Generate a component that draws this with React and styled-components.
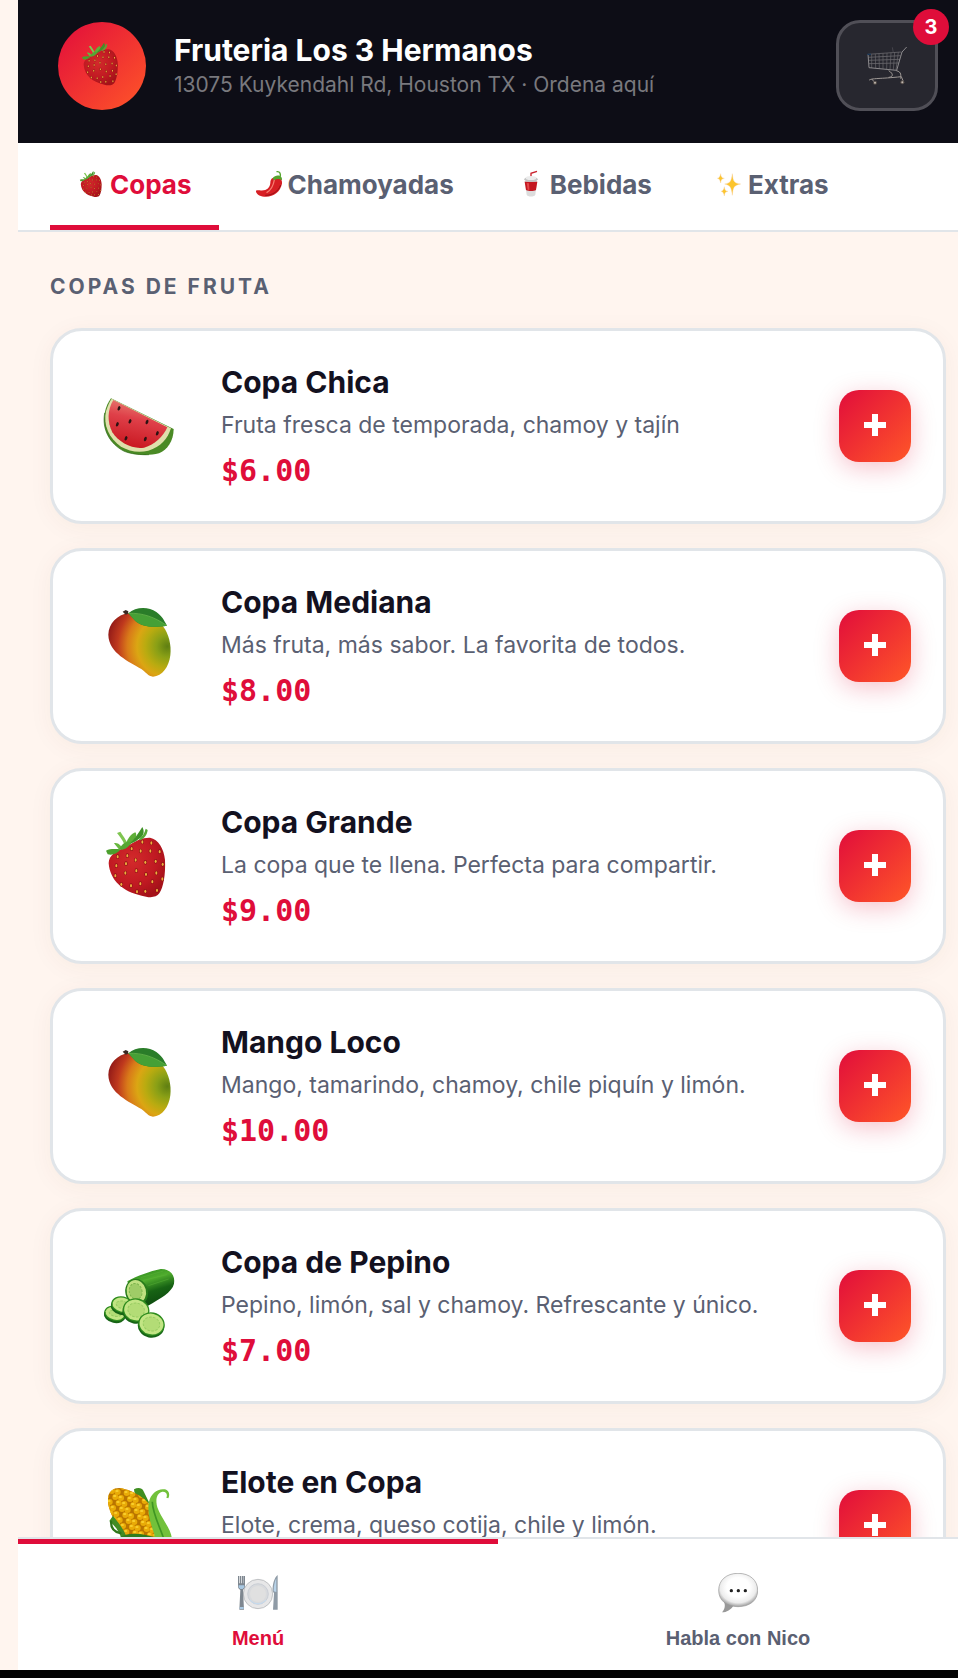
import React, { useId, useState } from 'react';
import styled, { createGlobalStyle } from 'styled-components';

const red = '#df0d3a';
const slate = '#5a6072';
const ink = '#13111f';
const line = '#e1e5e9';
const cream = '#fff5ef';
const warm = 'linear-gradient(135deg, #e10d3b, #ff5628)';

const Global = createGlobalStyle`
  * { box-sizing: border-box; }
  body { margin: 0; background: ${cream}; font-family: Inter, "Liberation Sans", sans-serif; }
  button { font: inherit; border: 0; background: none; padding: 0; cursor: pointer; }
`;

const Page = styled.div`
  height: 100vh;
  display: flex;
  flex-direction: column;
  overflow: hidden;
  border-bottom: 8px solid #040404;
`;

const Shell = styled.div`
  flex: 1;
  min-height: 0;
  margin: 0 -20px 0 18px;
  display: flex;
  flex-direction: column;
`;

const Header = styled.header`
  display: flex;
  align-items: center;
  gap: 28px;
  padding: 20px 40px 32px;
  background: #0d0d16;
`;

const Avatar = styled.div`
  width: 88px;
  height: 88px;
  padding-bottom: 4px;
  border-radius: 50%;
  background: ${warm};
  display: grid;
  place-items: center;
`;

const Brand = styled.div`
  flex: 1;
  padding-top: 2px;
`;

const BrandName = styled.h1`
  margin: 0;
  font-size: 30px;
  line-height: 36px;
  font-weight: 700;
  color: #fff;
`;

const Address = styled.p`
  margin: 0;
  font-size: 21px;
  line-height: 34px;
  color: #79797e;
`;

const CartButton = styled.button`
  position: relative;
  width: 102px;
  height: 91px;
  border: 3px solid #504f57;
  border-radius: 24px;
  background: #27272f;
  display: grid;
  place-items: center;
`;

const Badge = styled.span`
  position: absolute;
  top: -14px;
  right: -14px;
  width: 36px;
  height: 36px;
  border-radius: 50%;
  background: ${red};
  color: #fff;
  font-size: 20px;
  line-height: 36px;
  font-weight: 700;
  text-align: center;
`;

const Tabs = styled.nav`
  display: flex;
  gap: 8px;
  padding: 0 32px;
  background: #fff;
  border-bottom: 2px solid ${line};
`;

const Tab = styled.button`
  display: flex;
  align-items: center;
  gap: 4px;
  height: 87px;
  padding: 0 28px;
  font-size: 26px;
  font-weight: 700;
  white-space: nowrap;
  color: ${(p) => (p.$active ? red : slate)};
  border-bottom: 5px solid ${(p) => (p.$active ? red : 'transparent')};
`;

const Menu = styled.main`
  flex: 1;
  min-height: 0;
  overflow-y: auto;
  scrollbar-width: none;
  padding: 40px 32px 24px;
  background: ${cream};
`;

const SectionTitle = styled.h2`
  margin: 0 0 26px;
  font-size: 21px;
  line-height: 30px;
  font-weight: 700;
  letter-spacing: 3px;
  text-transform: uppercase;
  color: ${slate};
`;

const List = styled.ul`
  list-style: none;
  margin: 0;
  padding: 0;
  display: flex;
  flex-direction: column;
  gap: 24px;
`;

const Card = styled.li`
  display: flex;
  align-items: center;
  gap: 28px;
  padding: 26px 32px;
  background: #fff;
  border: 3px solid ${line};
  border-radius: 32px;
  box-shadow: 0 4px 24px rgba(120, 50, 20, 0.05);
`;

const Picture = styled.div`
  width: 108px;
  padding-bottom: 8px;
  display: flex;
  justify-content: center;
`;

const Details = styled.div`flex: 1;`;

const Name = styled.h3`
  margin: 0;
  font-size: 30px;
  line-height: 50px;
  font-weight: 700;
  color: ${ink};
`;

const Description = styled.p`
  margin: 0;
  font-size: 23px;
  line-height: 36px;
  color: ${slate};
`;

const Price = styled.p`
  margin: 4px 0 0;
  font-family: "DejaVu Sans Mono", monospace;
  font-size: 30px;
  line-height: 48px;
  font-weight: 700;
  color: ${red};
`;

const AddButton = styled.button`
  width: 72px;
  height: 72px;
  padding-bottom: 2px;
  border-radius: 20px;
  background: ${warm};
  box-shadow: 0 6px 24px rgba(224, 14, 56, 0.25);
  display: grid;
  place-items: center;
`;

const BottomNav = styled.nav`
  display: grid;
  grid-template-columns: 1fr 1fr;
  background: #fff;
  border-top: 2px solid ${line};
`;

const NavButton = styled.button`
  display: flex;
  flex-direction: column;
  align-items: center;
  gap: 13px;
  padding: 29px 0 20px;
  border-top: 5px solid ${(p) => (p.$active ? red : 'transparent')};
  font-family: "Liberation Sans", Arial, sans-serif;
  font-size: 20px;
  line-height: 24px;
  font-weight: 700;
  color: ${(p) => (p.$active ? red : slate)};
`;

const Art = styled.svg`
  display: block;
  flex: none;
`;

const seeds = [
  [113, 170], [142, 167], [155, 146], [182, 153], [211, 153], [187, 126], [214, 129], [239, 155],
  [109, 197], [138, 191], [167, 180], [196, 187], [227, 184], [248, 193], [106, 227], [136, 219],
  [169, 212], [198, 223], [229, 219], [247, 237], [124, 253], [153, 257], [181, 251], [217, 245],
  [196, 274], [231, 271], [171, 275],
];

function Strawberry({ size }) {
  const id = useId();
  return (
    <Art width={size} height={size} viewBox="63 72 228 228" aria-hidden="true">
      <defs>
        <radialGradient id={id} cx="42%" cy="38%" r="65%">
          <stop offset="0" stopColor="#d32a2b" /><stop offset=".65" stopColor="#c01922" /><stop offset="1" stopColor="#a51219" />
        </radialGradient>
      </defs>
      <path fill={`url(#${id})`} d="M86 190C86 165 110 151 140 140C165 122 190 112 210 113C235 117 252 146 255 180C257 225 250 262 238 280C228 295 205 293 185 287C130 276 90 242 86 190Z" />
      {seeds.map(([x, y]) => (
        <g key={`${x}-${y}`}>
          <ellipse cx={x} cy={y} rx="5" ry="7" fill="#8f1116" />
          <ellipse cx={x} cy={y} rx="3" ry="5" fill="#eeb03d" />
        </g>
      ))}
      <path fill="#4c9f2d" d="M78 152C92 145 108 148 122 148C113 160 98 167 83 163Z" />
      <path fill="#68b83f" d="M102 130C112 126 124 136 128 148L116 147Z" />
      <path fill="#7fc551" d="M111 99L121 95C130 108 137 119 143 130L133 133C127 119 119 109 111 99Z" />
      <path fill="#5faf38" d="M134 146C138 120 154 100 166 97C173 105 166 120 154 130Z" />
      <path fill="#3f9128" d="M147 132C164 119 174 101 187 81C196 97 189 111 175 118C167 125 156 131 147 132Z" />
      <path fill="#58a836" d="M176 119C186 109 194 101 197 86L203 90C201 106 192 116 180 121Z" />
      <path fill="#56a634" d="M117 148C125 132 139 122 153 126C150 139 138 146 127 149Z" />
    </Art>
  );
}

function Mango({ size }) {
  const id = useId();
  return (
    <Art width={size} height={size} viewBox="63 105 228 228" aria-hidden="true">
      <defs>
        <radialGradient id={id} gradientUnits="userSpaceOnUse" cx="262" cy="232" r="182">
          <stop offset="0" stopColor="#5f7f12" /><stop offset=".18" stopColor="#8aa016" /><stop offset=".36" stopColor="#b9ab10" />
          <stop offset=".5" stopColor="#dba613" /><stop offset=".66" stopColor="#d97a19" /><stop offset=".82" stopColor="#bf391d" /><stop offset="1" stopColor="#921a18" />
        </radialGradient>
      </defs>
      <path fill={`url(#${id})`} d="M85 197C86 162 112 138 145 132C185 130 228 145 250 173C266 194 275 228 271 259C267 293 247 322 219 323C204 322 198 309 184 300C149 278 86 253 85 197Z" />
      <path fill="#3a2a24" d="M128 128L137 123L145 127L144 134L137 137Z" />
      <path fill="#2a7d29" d="M145 133C167 113 205 112 229 129C245 140 252 153 261 170C222 176 190 176 166 156Z" />
      <path fill="#46a036" d="M145 133C185 133 222 143 261 170C222 176 190 176 166 156Z" />
      <path d="M145 133C187 131 224 144 261 170" fill="none" stroke="#6fba50" strokeWidth="2" />
    </Art>
  );
}

const melonSeeds = [[357, 508], [352, 556], [390, 547], [441, 549], [472, 583], [378, 598], [436, 600]];

function Watermelon({ size }) {
  const id = useId();
  return (
    <Art width={size} height={size} viewBox="303 435 228 228" aria-hidden="true">
      <defs>
        <linearGradient id={id} x1=".6" y1="0" x2=".35" y2="1">
          <stop offset="0" stopColor="#e98577" /><stop offset=".4" stopColor="#df4049" /><stop offset="1" stopColor="#c8161f" />
        </linearGradient>
      </defs>
      <path fill="#4a8a25" d="M333 478L521 570C521 605 502 633 477 643C445 651 400 649 371 636C331 615 305 573 314 522C318 503 325 489 333 478Z" />
      <path fill="#dfe0ac" d="M335 479L513 568C503 600 482 624 445 635C413 642 387 636 363 623C327 599 309 558 318 517C323 500 329 487 335 479Z" />
      <path fill={`url(#${id})`} d="M340 483L502 565C489 593 465 617 432 626C397 632 356 610 337 580C321 549 322 512 340 483Z" />
      <path fill="none" stroke="#2e6716" strokeWidth="2" d="M314 522C305 573 331 615 371 636C390 645 424 648 447 647" />
      {melonSeeds.map(([x, y]) => (
        <ellipse key={x} cx={x} cy={y} rx="4" ry="7" fill="#2c1212" transform={`rotate(20 ${x} ${y})`} />
      ))}
    </Art>
  );
}

const slices = [[105, 189, 33, 23], [126, 163, 33, 25], [168, 179, 40, 35], [214, 221, 40, 35]];

function Cucumber({ size }) {
  const id = useId();
  return (
    <Art width={size} height={size} viewBox="63 39 228 228" aria-hidden="true">
      <defs>
        <linearGradient id={id} x1=".3" y1="0" x2=".7" y2="1">
          <stop offset="0" stopColor="#2f8b20" /><stop offset=".3" stopColor="#4fac2d" /><stop offset=".6" stopColor="#176314" /><stop offset="1" stopColor="#0c470e" />
        </linearGradient>
      </defs>
      <path fill={`url(#${id})`} d="M142 91C172 74 210 61 242 54C270 53 287 73 282 98C276 124 240 143 204 164C180 155 150 125 142 91Z" />
      <path d="M182 80L250 60M190 88L261 71M205 104L266 84" stroke="#5db53a" strokeWidth="3" opacity=".45" />
      <ellipse cx="170" cy="123" rx="34" ry="40" fill="#287c1b" transform="rotate(-14 170 123)" />
      <ellipse cx="169" cy="122" rx="29" ry="35" fill="#bfe080" transform="rotate(-14 169 122)" />
      <ellipse cx="167" cy="121" rx="19" ry="24" fill="#9fcc67" stroke="#7fb64f" strokeWidth="3" strokeDasharray="7 4" transform="rotate(-14 167 121)" />
      {slices.map(([x, y, rx, ry]) => (
        <g key={x} transform={`rotate(12 ${x} ${y})`}>
          <ellipse cx={x} cy={y + 4} rx={rx} ry={ry} fill="#176416" />
          <ellipse cx={x} cy={y - 2} rx={rx} ry={ry} fill="#2e8c1e" />
          <ellipse cx={x} cy={y - 2} rx={rx - 4} ry={ry - 4} fill="#c2e584" />
          <ellipse cx={x} cy={y - 2} rx={rx - 15} ry={ry - 14} fill="#b3dc76" stroke="#98cc62" strokeWidth="3" strokeDasharray="8 4" />
        </g>
      ))}
    </Art>
  );
}

const kernels = [];
for (let r = -4; r < 10; r += 1) {
  for (let c = 0; c < 9; c += 1) {
    kernels.push([322 + r * 10 + c * 17, 318 + r * 18 - c * 6 + (c % 2) * 9]);
  }
}

function Corn({ size }) {
  const id = useId();
  return (
    <Art width={size} height={size} viewBox="303 249 228 228" aria-hidden="true">
      <defs>
        <clipPath id={id}>
          <path d="M325 286C329 266 350 256 373 264C408 273 443 297 453 319C462 350 469 388 470 425L440 450L395 418C362 392 316 330 325 286Z" />
        </clipPath>
      </defs>
      <path fill="#3f8e21" d="M402 265C413 258 426 260 430 269L447 304L440 316C421 300 403 287 402 265Z" />
      <g clipPath={`url(#${id})`}>
        <path fill="#b97400" d="M300 240H490V470H300Z" />
        {kernels.map(([x, y]) => (
          <g key={`${x}-${y}`}>
            <ellipse cx={x} cy={y} rx="9" ry="9" fill="#e9ab07" />
            <ellipse cx={x - 2} cy={y - 3} rx="5" ry="3" fill="#f9d02f" />
          </g>
        ))}
      </g>
      <path fill="#418c23" d="M328 360L339 344C354 364 370 382 378 404L364 410C356 390 345 374 328 360Z" />
      <path fill="none" stroke="#2e7519" strokeWidth="7" strokeLinecap="round" d="M333 362C333 382 344 393 361 396" />
      <path fill="#72c13b" d="M447 303C452 277 474 261 495 265C506 268 511 279 505 292L499 290C504 278 497 271 487 272C469 276 466 298 472 319C483 352 512 380 516 413C517 445 500 466 465 470L463 400C451 366 441 333 447 303Z" />
      <path fill="none" stroke="#3f9523" strokeWidth="5" d="M457 302C457 335 477 371 492 415" />
      <path fill="#2f7c1d" d="M356 412C380 392 430 396 470 411L490 465C440 478 385 465 356 412Z" />
    </Art>
  );
}

function Chili() {
  return (
    <Art width="28" height="28" viewBox="762 508 84 84" aria-hidden="true">
      <path fill="#d71f24" d="M815 532C832 526 845 534 843 549C838 573 818 588 795 588C780 588 767 582 765 573C764 568 769 568 776 569C795 572 807 562 808 547C808 540 810 535 815 532Z" />
      <path fill="none" stroke="#f77c70" strokeWidth="4" strokeLinecap="round" d="M820 538C817 554 811 568 798 575" />
      <path fill="none" stroke="#941015" strokeWidth="3" d="M839 553C832 572 815 584 793 584" />
      <path fill="#55a52d" d="M815 533C820 525 830 523 837 526C842 528 844 533 843 539C834 533 826 535 819 539Z" />
      <path fill="none" stroke="#55a52d" strokeWidth="4" strokeLinecap="round" d="M837 529C840 520 837 512 828 513" />
    </Art>
  );
}

function Cup() {
  return (
    <Art width="28" height="28" viewBox="117 508 84 84" aria-hidden="true">
      <path fill="none" stroke="#c9202b" strokeWidth="4" d="M156 530V518L174 512" />
      <path fill="#dcdcdc" d="M137 540L143 582C144 589 168 589 169 582L174 540Z" />
      <path fill="#c31720" d="M137 543L141 568C149 572 164 572 171 568L175 543Z" />
      <path fill="#e4474a" d="M143 547L146 567L151 568L150 548Z" />
      <ellipse cx="156" cy="536" rx="20" ry="8" fill="#c4c4c4" />
      <ellipse cx="156" cy="532" rx="16" ry="6" fill="#ececec" />
    </Art>
  );
}

function Sparkles() {
  return (
    <Art width="28" height="28" viewBox="715 508 84 84" aria-hidden="true">
      <g fill="#fcc52d" stroke="#f5c98e" strokeWidth="1">
        <path d="M764 519C766 542 769 547 789 550C769 554 766 559 764 584C761 559 758 554 741 550C758 547 761 542 764 519Z" />
        <path d="M729 519C730 529 732 531 740 533C732 535 730 537 729 547C727 537 725 535 719 533C725 531 727 529 729 519Z" />
        <path d="M740 558C741 568 743 570 751 572C743 574 741 576 740 586C738 576 736 574 730 572C736 570 738 568 740 558Z" />
      </g>
    </Art>
  );
}

function Cart() {
  return (
    <Art width="44" height="44" viewBox="434 94 132 132" fill="none" aria-hidden="true">
      <path d="M443 125L543 118M444 134L541 129M445 143L539 140M446 153L536 151" stroke="#77757a" strokeWidth="2" />
      <path d="M454 125V166M465 124L466 166M476 123L477 167M488 122V168M500 121L499 169M512 120L509 170M523 119L519 171M534 119L527 172" stroke="#6b696e" strokeWidth="2" />
      <path d="M443 124L446 165L529 173L545 118L559 103" stroke="#8b898c" strokeWidth="3" strokeLinejoin="round" />
      <path d="M505 174C522 184 517 194 505 194M528 174C545 178 541 189 541 198M446 203C452 196 480 199 543 192L550 209M454 199L464 210" stroke="#9d9794" strokeWidth="3" />
      <path d="M516 104L519 120" stroke="#55535a" strokeWidth="2" />
      <path d="M441 125H452" stroke="#183657" strokeWidth="4" />
      <circle cx="464" cy="210" r="6" fill="#554d49" /><circle cx="464" cy="210" r="3" fill="#c2b9b1" />
      <circle cx="546" cy="209" r="6" fill="#554d49" /><circle cx="546" cy="209" r="3" fill="#c2b9b1" />
    </Art>
  );
}

function Plate() {
  return (
    <Art width="40" height="40" viewBox="714 519 120 120" aria-hidden="true">
      <circle cx="774" cy="582" r="44" fill="#e7e7e8" stroke="#a8aaad" strokeWidth="2" />
      <circle cx="774" cy="582" r="31" fill="#d8dadd" stroke="#bfc6ce" strokeWidth="2" />
      <circle cx="774" cy="582" r="24" fill="#e0e0e0" />
      <path d="M750 600A31 31 0 0 0 798 600" fill="none" stroke="#c3dcf2" strokeWidth="3" />
      <path fill="#7e8790" d="M714 528H718V550H720V528H724V550H726V528H730V550H731V528H735V558C735 565 731 567 729 570L732 629H718L721 570C717 567 714 565 714 558Z" />
      <path fill="#a8c8e2" d="M716 556H733V562L728 567H721L716 562ZM719 621H731V627H719Z" />
      <path fill="#8f9ba6" d="M833 525C822 534 817 553 818 574L822 580L819 629H833Z" />
      <path fill="#b7d2e8" d="M829 535C823 545 821 561 821 574L829 576Z" />
    </Art>
  );
}

function Bubble() {
  const id = useId();
  return (
    <Art width="40" height="40" viewBox="720 519 120 120" aria-hidden="true">
      <defs>
        <radialGradient id={id} cx="50%" cy="42%" r="58%">
          <stop offset=".5" stopColor="#fff" /><stop offset=".8" stopColor="#ececec" /><stop offset="1" stopColor="#9e9e9e" />
        </radialGradient>
      </defs>
      <path fill="#989898" d="M738 606C743 617 740 628 732 637C746 637 759 629 766 617Z" />
      <path fill={`url(#${id})`} stroke="#989898" strokeWidth="2" d="M780 520C816 520 839 541 839 571C839 601 816 620 780 620C745 620 722 601 722 571C722 541 745 520 780 520Z" />
      <g fill="#202020"><circle cx="760" cy="572" r="5" /><circle cx="781" cy="572" r="5" /><circle cx="802" cy="572" r="5" /></g>
    </Art>
  );
}

function Plus() {
  return (
    <Art width="22" height="22" viewBox="0 0 22 22" aria-hidden="true">
      <path d="M11 0V22M0 11H22" stroke="#fff" strokeWidth="6" />
    </Art>
  );
}

const tabs = [
  { label: 'Copas', icon: <Strawberry size={28} /> },
  { label: 'Chamoyadas', icon: <Chili /> },
  { label: 'Bebidas', icon: <Cup /> },
  { label: 'Extras', icon: <Sparkles /> },
];

const products = [
  { name: 'Copa Chica', text: 'Fruta fresca de temporada, chamoy y tajín', price: 6, Drawing: Watermelon },
  { name: 'Copa Mediana', text: 'Más fruta, más sabor. La favorita de todos.', price: 8, Drawing: Mango },
  { name: 'Copa Grande', text: 'La copa que te llena. Perfecta para compartir.', price: 9, Drawing: Strawberry },
  { name: 'Mango Loco', text: 'Mango, tamarindo, chamoy, chile piquín y limón.', price: 10, Drawing: Mango },
  { name: 'Copa de Pepino', text: 'Pepino, limón, sal y chamoy. Refrescante y único.', price: 7, Drawing: Cucumber },
  { name: 'Elote en Copa', text: 'Elote, crema, queso cotija, chile y limón.', price: 7, Drawing: Corn },
];

export default function App() {
  const [tab, setTab] = useState('Copas');
  const [view, setView] = useState('menu');
  const [count, setCount] = useState(3);

  return (
    <Page>
      <Global />
      <Shell>
        <Header>
          <Avatar><Strawberry size={46} /></Avatar>
          <Brand>
            <BrandName>Fruteria Los 3 Hermanos</BrandName>
            <Address>13075 Kuykendahl Rd, Houston TX · Ordena aquí</Address>
          </Brand>
          <CartButton aria-label="Carrito">
            <Cart />
            <Badge>{count}</Badge>
          </CartButton>
        </Header>
        <Tabs>
          {tabs.map(({ label, icon }) => (
            <Tab key={label} $active={tab === label} onClick={() => setTab(label)}>
              {icon}
              {label}
            </Tab>
          ))}
        </Tabs>
        <Menu>
          <SectionTitle>Copas de fruta</SectionTitle>
          <List>
            {products.map(({ name, text, price, Drawing }) => (
              <Card key={name}>
                <Picture><Drawing size={76} /></Picture>
                <Details>
                  <Name>{name}</Name>
                  <Description>{text}</Description>
                  <Price>${price.toFixed(2)}</Price>
                </Details>
                <AddButton aria-label={`Agregar ${name}`} onClick={() => setCount(count + 1)}>
                  <Plus />
                </AddButton>
              </Card>
            ))}
          </List>
        </Menu>
        <BottomNav>
          <NavButton $active={view === 'menu'} onClick={() => setView('menu')}>
            <Plate />
            Menú
          </NavButton>
          <NavButton $active={view === 'chat'} onClick={() => setView('chat')}>
            <Bubble />
            Habla con Nico
          </NavButton>
        </BottomNav>
      </Shell>
    </Page>
  );
}
